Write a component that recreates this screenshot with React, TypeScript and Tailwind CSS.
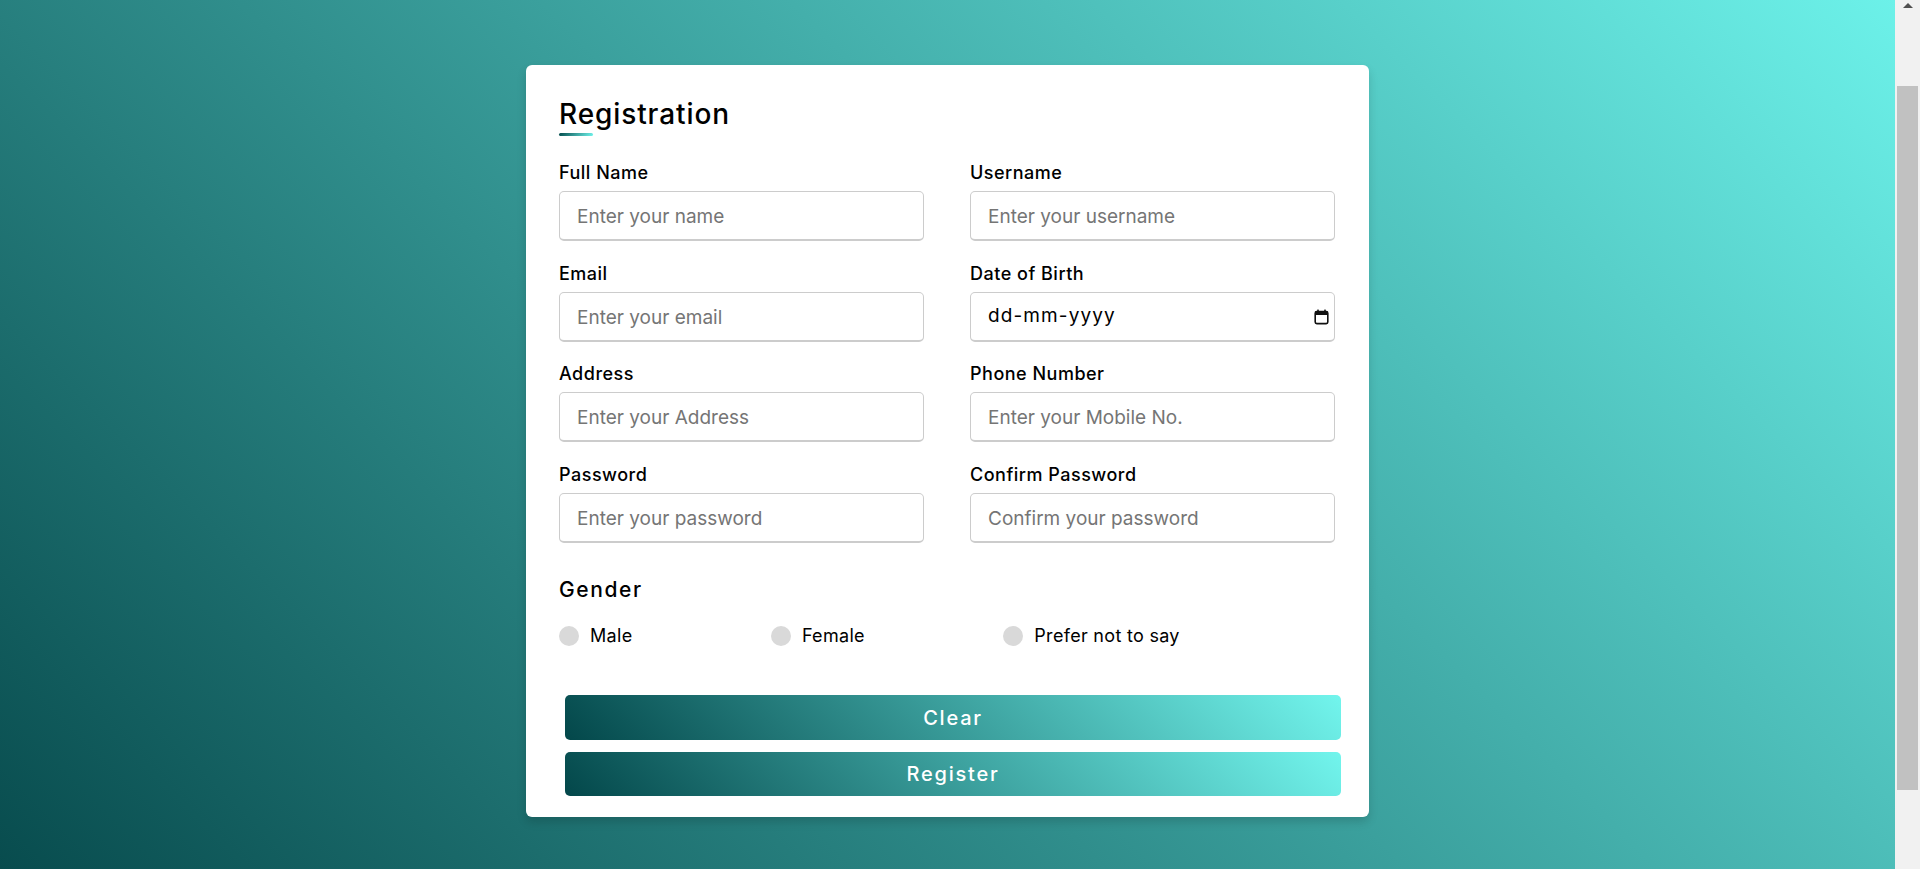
import React from "react";

const fields = [
  { label: "Full Name", placeholder: "Enter your name", type: "text" },
  { label: "Username", placeholder: "Enter your username", type: "text" },
  { label: "Email", placeholder: "Enter your email", type: "text" },
  { label: "Date of Birth", placeholder: "", type: "date" },
  { label: "Address", placeholder: "Enter your Address", type: "text" },
  { label: "Phone Number", placeholder: "Enter your Mobile No.", type: "text" },
  { label: "Password", placeholder: "Enter your password", type: "password" },
  { label: "Confirm Password", placeholder: "Confirm your password", type: "password" },
];

function CalendarIcon() {
  return (
    <svg width="15" height="16" viewBox="0 0 15 16" fill="none">
      <rect x="1.2" y="2.6" width="12.6" height="12" rx="1.6" stroke="#111" strokeWidth="1.6" />
      <rect x="1.2" y="2.6" width="12.6" height="3.4" fill="#111" />
      <rect x="3.2" y="0.6" width="1.6" height="3" fill="#111" />
      <rect x="10.2" y="0.6" width="1.6" height="3" fill="#111" />
    </svg>
  );
}

export default function App() {
  return (
    <div className="flex h-[869px] w-full overflow-hidden font-['Inter',sans-serif]">
      <div className="flex flex-1 justify-center items-start pt-[65px] bg-[linear-gradient(45deg,#084c4e,#6cf1e9)]">
        <div className="w-[843px] bg-white rounded-[6px] shadow-[0_5px_10px_rgba(0,0,0,0.15)] pt-[32px] pb-[21px] pl-[33px] pr-[34px]">
          <h1 className="text-[28px] leading-[34px] font-medium tracking-[0.9px] text-black">Registration</h1>
          <div className="mt-[2px] h-[3px] w-[34px] rounded-[5px] bg-[linear-gradient(135deg,#034a4b,#71f5ed)]" />
          <div className="mt-[26px] grid grid-cols-2 gap-x-[46px] gap-y-[21.5px]">
            {fields.map((f) => (
              <div key={f.label} className="flex flex-col">
                <span className="text-[18px] leading-[22px] font-medium tracking-[0.5px] text-black mb-[7px]">{f.label}</span>
                {f.type === "date" ? (
                  <div className="h-[50px] w-full rounded-[5px] border border-[#ccc] border-b-2 pl-[17px] pr-[5px] pt-[1px] flex items-center justify-between text-[19px] text-black">
                    <span className="tracking-[1.1px]">dd-mm-yyyy</span>
                    <CalendarIcon />
                  </div>
                ) : (
                  <input
                    type={f.type}
                    placeholder={f.placeholder}
                    className="h-[50px] w-full rounded-[5px] border border-[#ccc] border-b-2 pl-[17px] pt-[2px] text-[19px] text-black outline-none placeholder:text-[#757575] bg-white"
                  />
                )}
              </div>
            ))}
          </div>
          <div className="mt-[35.5px]">
            <div className="text-[21px] leading-[24px] font-medium tracking-[1.6px] text-black">Gender</div>
            <div className="mt-[22px] w-[80%] flex justify-between items-center">
              {["Male", "Female", "Prefer not to say"].map((g) => (
                <label key={g} className="flex items-center cursor-pointer h-[24px]">
                  <span className="h-[20px] w-[20px] rounded-full bg-[#d9d9d9] mr-[11px]" />
                  <span className="text-[18px] leading-[24px] tracking-[0.3px] text-black">{g}</span>
                </label>
              ))}
            </div>
          </div>
          <div className="mt-[47px] ml-[6px] w-[776px] flex flex-col gap-[12px]">
            <button className="h-[45px] w-full rounded-[5px] text-white text-[20px] font-medium tracking-[1.8px] bg-[linear-gradient(45deg,#03474a,#72f5ed)]">
              Clear
            </button>
            <button className="h-[44px] w-full rounded-[5px] text-white text-[20px] font-medium tracking-[1.8px] bg-[linear-gradient(45deg,#03474a,#72f5ed)]">
              Register
            </button>
          </div>
        </div>
      </div>
      <div className="w-[25px] h-full bg-[#f1f1f1] flex flex-col items-center">
        <div className="mt-[3px] h-0 w-0 border-l-[5px] border-r-[5px] border-b-[5px] border-l-transparent border-r-transparent border-b-[#505050]" />
        <div className="mt-[78px] h-[704px] w-[21px] bg-[#c1c1c1]" />
      </div>
    </div>
  );
}
